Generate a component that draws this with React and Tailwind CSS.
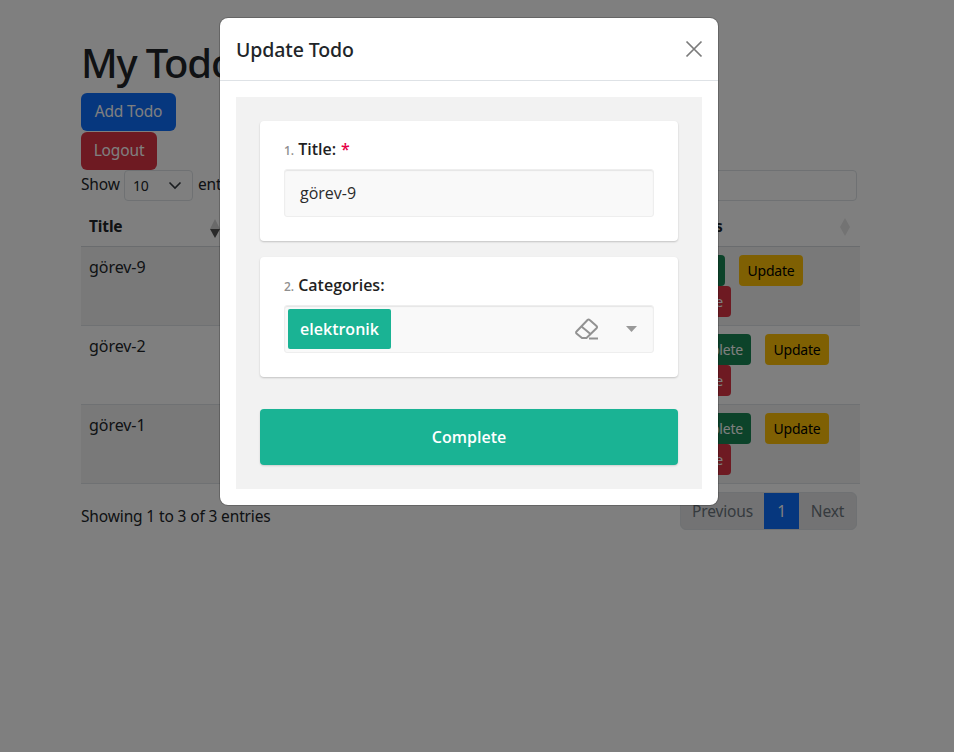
const ui = { fontFamily: '"Noto Sans", "Open Sans", sans-serif' };
const open = { fontFamily: '"Open Sans", "Noto Sans", sans-serif' };

function Btn({ c, children, className = "" }) {
  return <span className={`inline-block h-[31px] rounded-[4px] px-2 text-[14px] leading-[31px] tracking-[-0.2px] ${c} ${className}`}>{children}</span>;
}

function Row({ title, striped, first, complete }) {
  return (
    <div className={`relative flex h-[79px] border-b border-[#dee2e6] ${striped ? "bg-[#f2f2f2]" : "bg-white"}`}>
      <div className="w-[585px] pl-2 pt-[8px] text-[16px] leading-6 tracking-[-0.06px]">{title}</div>
      <div className="pt-[8px] pl-0 flex-1">
        <div className={`flex ${first ? "w-[150px]" : "w-[170px]"} flex-wrap gap-y-0`}>
          <Btn c="bg-[#198754] text-white" className={`${first ? "w-[59px]" : "w-[85px]"} text-right`}>{complete}</Btn>
          <Btn c="bg-[#ffc107] text-black" className="ml-[14px] w-[64px] text-center">Update</Btn>
          <Btn c="bg-[#dc3545] text-white" className="w-[65px] text-right">Delete</Btn>
        </div>
      </div>
    </div>
  );
}

function Eraser() {
  return (
    <svg width="24" height="22" viewBox="0 0 24 22" fill="none" stroke="#929292" strokeWidth="2">
      <path d="M1.5 13.5 L12.5 2 a1.6 1.6 0 0 1 2.2 0 L21.5 8 a1.6 1.6 0 0 1 0 2.2 L11.5 20 L7 20 L1.5 15.5 a1.4 1.4 0 0 1 0-2 Z" />
      <path d="M6.5 8.5 L15.5 16" />
      <path d="M14 20.5 H23" />
    </svg>
  );
}

export default function App() {
  return (
    <div className="relative h-[752px] w-[954px] overflow-hidden bg-white text-[15.5px] tracking-[-0.14px] text-[#212529]" style={ui}>
      <div className="ml-[81px] w-[776px] pt-[40px]">
        <h1 className="h-[53px] text-[40px] font-medium leading-[46px] tracking-[-1.2px]">My Todo List</h1>
        <div className="flex flex-col items-start gap-px">
          <span className="flex h-[38px] w-[95px] items-center justify-center rounded-[6px] bg-[#0d6efd] text-white">Add Todo</span>
          <span className="flex h-[38px] w-[76px] items-center justify-center rounded-[6px] bg-[#dc3545] text-white">Logout</span>
        </div>
        <div className="flex h-[30px] items-center justify-between">
          <div className="flex items-center gap-[5px]">
            <span className="w-[38px]">Show</span>
            <span className="flex h-[31px] w-[69px] items-center justify-between rounded-[4px] border border-[#dee2e6] pl-2 pr-[10px] text-[14px]">
              10
              <svg width="14" height="10" viewBox="0 0 14 10" fill="none" stroke="#343a40" strokeWidth="1.6"><path d="M1.5 2.5 L7 8 L12.5 2.5" /></svg>
            </span>
            <span>entries</span>
          </div>
          <span className="h-[31px] w-[200px] rounded-[4px] border border-[#dee2e6]" />
        </div>
        <div className="mt-[7px] w-[779px]">
          <div className="flex h-[40px] items-center border-b border-[#d5d8dc] font-bold">
            <span className="w-[128px] pl-2">Title</span>
            <svg width="12" height="22" viewBox="0 0 12 22" className="mt-[4px]"><path d="M6 1 L11 11 H1 Z" fill="#d4d4d4" /><path d="M6 20 L11 11 H1 Z" fill="#555" /></svg>
            <span className="ml-[445px] w-[184px]">Actions</span>
            <svg width="12" height="20" viewBox="0 0 12 20" className="ml-[-11px]"><path d="M6 1 L11 10 L6 19 L1 10 Z" fill="#e6e6e6" /></svg>
          </div>
          <Row title="görev-9" striped first complete="Undo" />
          <Row title="görev-2" complete="Complete" />
          <Row title="görev-1" striped complete="Complete" />
        </div>
        <div className="mt-[8px] flex h-[38px] items-center justify-between">
          <span className="pt-[11px]">Showing 1 to 3 of 3 entries</span>
          <div className="flex h-[38px] overflow-hidden rounded-[6px] border border-[#dee2e6] bg-[#e6e7e8]">
            <span className="flex w-[83px] items-center justify-center pt-px text-[#6c757d]">Previous</span>
            <span className="flex w-[35px] items-center justify-center bg-[#0d6efd] pt-px text-white">1</span>
            <span className="flex w-[57px] items-center justify-center pt-px text-[#6c757d]">Next</span>
          </div>
        </div>
      </div>

      <div className="absolute inset-0 bg-black/50" />

      <div className="absolute left-[219px] top-[17px] w-[500px] rounded-[9px] border border-black/20 bg-white bg-clip-padding">
        <div className="flex h-[63px] items-center justify-between border-b border-[#dee2e6] pl-[16px] pr-[15px]">
          <span className="pt-px text-[19.5px] font-medium tracking-[-0.1px] text-[#212529]" style={ui}>Update Todo</span>
          <svg width="18" height="18" viewBox="0 0 18 18" stroke="#7b7b7b" strokeWidth="1.7"><path d="M1.5 1.5 L16.5 16.5 M16.5 1.5 L1.5 16.5" /></svg>
        </div>
        <div className="p-[16px]">
          <div className="flex flex-col gap-4 bg-[#f2f2f2] px-6 py-6 tracking-normal" style={open}>
            <div className="h-[120px] rounded-[4px] bg-white px-6 pt-[16px] shadow-[0_1px_2px_rgba(0,0,0,0.2)]">
              <div className="flex h-[24px] items-baseline">
                <span className="mr-[4px] text-[12px] font-semibold text-[#8f8f8f]">1.</span>
                <span className="text-[16px] font-semibold text-[#1f1f1f]">Title:</span>
                <span className="ml-[5px] text-[16px] font-semibold text-[#e60045]">*</span>
              </div>
              <div className="mt-[8px] flex h-[48px] items-center rounded-[3px] border border-[#eeeeee] bg-[#f9f9f9] pl-[15px] text-[16px] text-[#2b2b2b] shadow-[inset_0_1px_1px_rgba(0,0,0,0.08)]">görev-9</div>
            </div>
            <div className="h-[120px] rounded-[4px] bg-white px-6 pt-[16px] shadow-[0_1px_2px_rgba(0,0,0,0.2)]">
              <div className="flex h-[24px] items-baseline">
                <span className="mr-[4px] text-[12px] font-semibold text-[#8f8f8f]">2.</span>
                <span className="text-[16px] font-semibold text-[#1f1f1f]">Categories:</span>
              </div>
              <div className="mt-[8px] flex h-[48px] items-center rounded-[3px] border border-[#eeeeee] bg-[#f9f9f9] pl-[3px] pr-[16px] shadow-[inset_0_1px_1px_rgba(0,0,0,0.08)]">
                <span className="flex h-[40px] w-[103px] items-center justify-center rounded-[2px] bg-[#1ab394] text-[16px] font-semibold text-white">elektronik</span>
                <span className="ml-auto"><Eraser /></span>
                <svg width="11" height="6" viewBox="0 0 11 6" className="ml-[27px]"><path d="M0 0 H11 L5.5 6 Z" fill="#999" /></svg>
              </div>
            </div>
            <div className="mt-4 flex h-[56px] items-center justify-center rounded-[4px] bg-[#1ab394] text-[16px] font-semibold text-white shadow-[0_1px_2px_rgba(0,0,0,0.15)]">Complete</div>
          </div>
        </div>
      </div>
    </div>
  );
}
